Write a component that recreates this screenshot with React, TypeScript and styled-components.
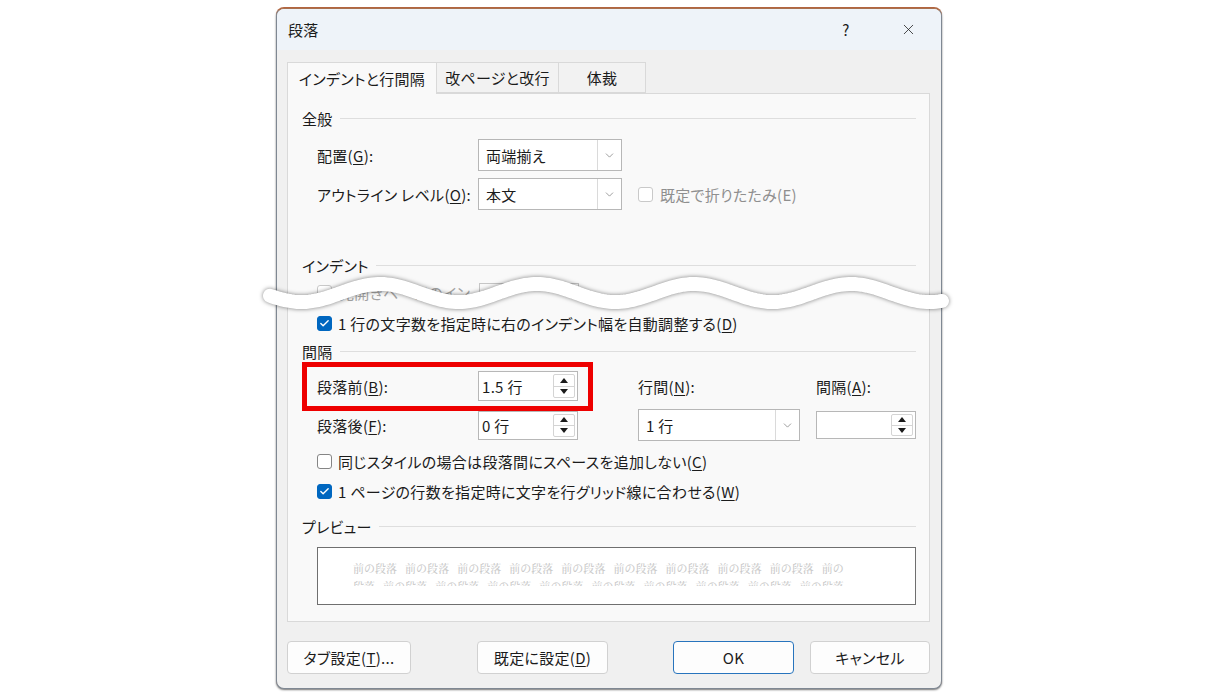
import React from "react";
import styled, { createGlobalStyle } from "styled-components";
import { Check, ChevronDown, X } from "lucide-react";

const GlobalStyle = createGlobalStyle`
  html, body {
    margin: 0;
    padding: 0;
    background: #ffffff;
  }
  body {
    font-family: "Noto Sans CJK JP", "Noto Sans", sans-serif;
    font-size: 15px;
    color: #1b1b1b;
    font-feature-settings: "palt";
    letter-spacing: 0.3px;
  }
`;

const Page = styled.div`
  width: 1218px;
  height: 696px;
  box-sizing: border-box;
  padding: 8px 0 0 276px;
`;

const Frame = styled.div`
  position: relative;
  width: 666px;
  height: 681px;
  box-sizing: border-box;
  border: 1px solid #7f8893;
  border-top-color: #a8704f;
  border-radius: 8px;
  background: #f0f0f0;
  box-shadow: 0 -1px 0 #b4653f, 0 1px 2px rgba(0, 0, 0, 0.55);
  display: flex;
  flex-direction: column;
`;

const TitleBar = styled.div`
  height: 41px;
  flex: none;
  display: flex;
  align-items: center;
  padding: 0 8px 0 11px;
  background: #eef3f9;
  border-radius: 7px 7px 0 0;
`;

const Title = styled.span`
  flex: 1;
`;

const TitleButton = styled.div<{ $gap?: number }>`
  width: 50px;
  height: 41px;
  margin-right: ${(p) => p.$gap ?? 0}px;
  display: flex;
  align-items: center;
  justify-content: center;
  color: #1b1b1b;
`;

const TabStrip = styled.div`
  display: flex;
  padding: 12px 0 0 10px;
  height: 31px;
  flex: none;
`;

const Tab = styled.div<{ $width: number; $active?: boolean }>`
  position: relative;
  z-index: ${(p) => (p.$active ? 1 : 0)};
  width: ${(p) => p.$width}px;
  height: ${(p) => (p.$active ? 32 : 31)}px;
  box-sizing: border-box;
  display: flex;
  align-items: center;
  justify-content: center;
  border: 1px solid #d9d9d9;
  border-bottom: ${(p) => (p.$active ? "none" : "1px solid #d9d9d9")};
  margin-left: -1px;
  background: ${(p) => (p.$active ? "#f9f9f9" : "#f2f2f2")};
  &:first-child {
    margin-left: 0;
  }
`;

const Panel = styled.div`
  position: relative;
  margin: 0 11px 0 10px;
  height: 529px;
  flex: none;
  box-sizing: border-box;
  border: 1px solid #d9d9d9;
  background: #f9f9f9;
  padding: 14px 13px 0 14px;
  display: flex;
  flex-direction: column;
`;

const GroupHeader = styled.div<{ $top: number }>`
  display: flex;
  align-items: center;
  gap: 7px;
  height: 20px;
  margin-top: ${(p) => p.$top}px;
  &::after {
    content: "";
    flex: 1;
    border-top: 1px solid #dedede;
  }
`;

const Row = styled.div<{ $top: number; $height: number; $muted?: boolean }>`
  display: flex;
  align-items: center;
  height: ${(p) => p.$height}px;
  margin-top: ${(p) => p.$top}px;
  padding-left: 15px;
  overflow: hidden;
  white-space: nowrap;
  color: ${(p) => (p.$muted ? "#a3a3a3" : "inherit")};
`;

const FieldLabel = styled.span`
  width: 161px;
  flex: none;
`;

const Key = styled.u`
  text-underline-offset: 2px;
  text-decoration-thickness: 1px;
`;

const Combo = styled.div<{ $width: number; $height: number }>`
  display: flex;
  flex: none;
  width: ${(p) => p.$width}px;
  height: ${(p) => p.$height}px;
  box-sizing: border-box;
  border: 1px solid #b7b7b7;
  background: #ffffff;
`;

const ComboText = styled.span`
  flex: 1;
  display: flex;
  align-items: center;
  padding-left: 7px;
`;

const ComboArrow = styled.span`
  width: 23px;
  display: flex;
  align-items: center;
  justify-content: center;
  border-left: 1px solid #dadada;
  color: #6b6b6b;
`;

const Spin = styled.div<{ $height: number }>`
  display: flex;
  width: 100px;
  height: ${(p) => p.$height}px;
  box-sizing: border-box;
  border: 1px solid #b7b7b7;
  background: #ffffff;
  padding: 2px 2px 2px 0;
`;

const SpinText = styled.span`
  flex: 1;
  display: flex;
  align-items: center;
  padding-left: 3px;
`;

const SpinButtons = styled.div`
  width: 20px;
  display: flex;
  flex-direction: column;
  border: 1px solid #d4d4d4;
  border-radius: 2px;
`;

const SpinButton = styled.div`
  flex: 1;
  display: flex;
  align-items: center;
  justify-content: center;
  & + & {
    border-top: 1px solid #d4d4d4;
  }
`;

const Box = styled.span<{ $checked?: boolean; $disabled?: boolean }>`
  width: 15px;
  height: 15px;
  flex: none;
  box-sizing: border-box;
  border-radius: 3px;
  border: 1px solid
    ${(p) => (p.$checked ? "#0067c0" : p.$disabled ? "#c9c9c9" : "#858585")};
  background: ${(p) => (p.$checked ? "#0067c0" : "#ffffff")};
  display: flex;
  align-items: center;
  justify-content: center;
  margin-right: ${(p) => (p.$disabled ? 7 : 6)}px;
`;

const Aside = styled.div`
  display: flex;
  align-items: center;
  margin-left: 16px;
  color: #8f8f8f;
`;

const GhostField = styled.span`
  width: 100px;
  height: 18px;
  margin-left: 9px;
  flex: none;
  box-sizing: border-box;
  border: 1px solid #c6c6c6;
  border-bottom: none;
`;

const SpacingGrid = styled.div`
  position: relative;
  display: grid;
  grid-template-columns: 161px 100px 60px 162px 16px 100px;
  grid-template-rows: 30px 32px;
  row-gap: 8px;
  align-items: center;
  margin: 10px 0 0 15px;
  white-space: nowrap;
`;

const Cell = styled.div<{ $col: number; $row: number }>`
  grid-column: ${(p) => p.$col};
  grid-row: ${(p) => p.$row};
  display: flex;
  align-items: center;
`;

const Highlight = styled.div`
  position: absolute;
  left: -15px;
  top: -9px;
  width: 291px;
  height: 49px;
  box-sizing: border-box;
  border: 5px solid #ee0000;
  pointer-events: none;
`;

const Preview = styled.div`
  margin: 11px 0 0 15px;
  height: 58px;
  box-sizing: border-box;
  border: 1px solid #6f6f6f;
  background: #ffffff;
  padding: 11px 0 0 35px;
`;

const PreviewLines = styled.div`
  height: 27px;
  overflow: hidden;
  font-family: "Noto Serif CJK JP", "Noto Sans CJK JP", serif;
  font-size: 11px;
  line-height: 18px;
  font-weight: 500;
  color: #c8c8c8;
  letter-spacing: 0.1px;
  word-spacing: 5px;
  white-space: nowrap;
`;

const Footer = styled.div`
  display: flex;
  padding: 19px 0 0 10px;
`;

const Button = styled.button<{ $width: number; $gap?: number; $primary?: boolean }>`
  width: ${(p) => p.$width}px;
  height: 33px;
  margin-left: ${(p) => p.$gap ?? 0}px;
  box-sizing: border-box;
  border: 1px solid ${(p) => (p.$primary ? "#2874bd" : "#d1d1d1")};
  border-radius: 4px;
  background: #fdfdfd;
  font: inherit;
  color: inherit;
  letter-spacing: inherit;
  padding: 0;
`;

const Wave = styled.svg`
  position: absolute;
  left: -7px;
  top: 253px;
  overflow: visible;
  filter: drop-shadow(0 0 2px rgba(0, 0, 0, 0.5));
  pointer-events: none;
`;

// wavy "cut" line across the dialog, drawn as a cosine curve
const WAVE_W = 674;
const WAVE_MID = 31;
const WAVE_AMP = 9;
const WAVE_CREST = 110;
const WAVE_PERIOD = 157;
const wavePath = (() => {
  const pts: string[] = [];
  for (let x = 0; x <= WAVE_W; x += 3) {
    const y = WAVE_MID - WAVE_AMP * Math.cos((2 * Math.PI * (x - WAVE_CREST)) / WAVE_PERIOD);
    pts.push(`${x === 0 ? "M" : "L"}${x} ${y.toFixed(1)}`);
  }
  return pts.join(" ");
})();

const Tri = ({ down }: { down?: boolean }) => (
  <svg width="8" height="5" viewBox="0 0 8 5">
    <polygon points={down ? "0,0 8,0 4,5" : "0,5 8,5 4,0"} fill="#1b1b1b" />
  </svg>
);

const SpinBox = ({ value, height }: { value: string; height: number }) => (
  <Spin $height={height}>
    <SpinText>{value}</SpinText>
    <SpinButtons>
      <SpinButton>
        <Tri />
      </SpinButton>
      <SpinButton>
        <Tri down />
      </SpinButton>
    </SpinButtons>
  </Spin>
);

const ComboBox = ({ value, width, height }: { value: string; width: number; height: number }) => (
  <Combo $width={width} $height={height}>
    <ComboText>{value}</ComboText>
    <ComboArrow>
      <ChevronDown size={13} strokeWidth={1.2} />
    </ComboArrow>
  </Combo>
);

const CheckBox = ({ checked, disabled }: { checked?: boolean; disabled?: boolean }) => (
  <Box $checked={checked} $disabled={disabled}>
    {checked && <Check size={11} color="#ffffff" strokeWidth={3} />}
  </Box>
);

const unit = "前の段落";
const line1 = Array(9).fill(unit).join(" ") + " 前の";
const line2 = "段落 " + Array(9).fill(unit).join(" ");

export default function App() {
  return (
    <Page>
      <GlobalStyle />
      <Frame>
        <TitleBar>
          <Title>段落</Title>
          <TitleButton $gap={12}>?</TitleButton>
          <TitleButton>
            <X size={17} strokeWidth={1.1} />
          </TitleButton>
        </TitleBar>

        <TabStrip>
          <Tab $width={150} $active>
            インデントと行間隔
          </Tab>
          <Tab $width={123}>改ページと改行</Tab>
          <Tab $width={88}>体裁</Tab>
        </TabStrip>

        <Panel>
          <GroupHeader $top={0}>全般</GroupHeader>
          <Row $top={11} $height={32}>
            <FieldLabel>
              配置(<Key>G</Key>):
            </FieldLabel>
            <ComboBox value="両端揃え" width={144} height={32} />
          </Row>
          <Row $top={7} $height={32}>
            <FieldLabel>
              アウトライン レベル(<Key>O</Key>):
            </FieldLabel>
            <ComboBox value="本文" width={144} height={32} />
            <Aside>
              <CheckBox disabled />
              既定で折りたたみ(E)
            </Aside>
          </Row>

          <GroupHeader $top={45}>インデント</GroupHeader>
          <Row $top={8} $height={18} $muted>
            <CheckBox disabled />
            見開きページのイン
            <GhostField />
          </Row>
          <Row $top={12} $height={20}>
            <CheckBox checked />1 行の文字数を指定時に右のインデント幅を自動調整する(<Key>D</Key>)
          </Row>

          <GroupHeader $top={8}>間隔</GroupHeader>
          <SpacingGrid>
            <Cell $col={1} $row={1}>
              段落前(<Key>B</Key>):
            </Cell>
            <Cell $col={2} $row={1}>
              <SpinBox value="1.5 行" height={30} />
            </Cell>
            <Cell $col={4} $row={1}>
              行間(<Key>N</Key>):
            </Cell>
            <Cell $col={6} $row={1}>
              間隔(<Key>A</Key>):
            </Cell>
            <Cell $col={1} $row={2}>
              段落後(<Key>F</Key>):
            </Cell>
            <Cell $col={2} $row={2}>
              <SpinBox value="0 行" height={29} />
            </Cell>
            <Cell $col={4} $row={2}>
              <ComboBox value="1 行" width={162} height={32} />
            </Cell>
            <Cell $col={6} $row={2}>
              <SpinBox value="" height={28} />
            </Cell>
            <Highlight />
          </SpacingGrid>
          <Row $top={10} $height={20}>
            <CheckBox />
            同じスタイルの場合は段落間にスペースを追加しない(<Key>C</Key>)
          </Row>
          <Row $top={10} $height={20}>
            <CheckBox checked />1 ページの行数を指定時に文字を行グリッド線に合わせる(<Key>W</Key>)
          </Row>

          <GroupHeader $top={15}>プレビュー</GroupHeader>
          <Preview>
            <PreviewLines>
              {line1}
              <br />
              {line2}
            </PreviewLines>
          </Preview>
        </Panel>

        <Footer>
          <Button $width={124}>
            タブ設定(<Key>T</Key>)...
          </Button>
          <Button $width={131} $gap={66}>
            既定に設定(<Key>D</Key>)
          </Button>
          <Button $width={121} $gap={65} $primary>
            OK
          </Button>
          <Button $width={120} $gap={16}>
            キャンセル
          </Button>
        </Footer>

        <Wave width={WAVE_W} height={62} viewBox={`0 0 ${WAVE_W} 62`}>
          <path d={wavePath} fill="none" stroke="#ffffff" strokeWidth={14} strokeLinecap="round" />
        </Wave>
      </Frame>
    </Page>
  );
}
